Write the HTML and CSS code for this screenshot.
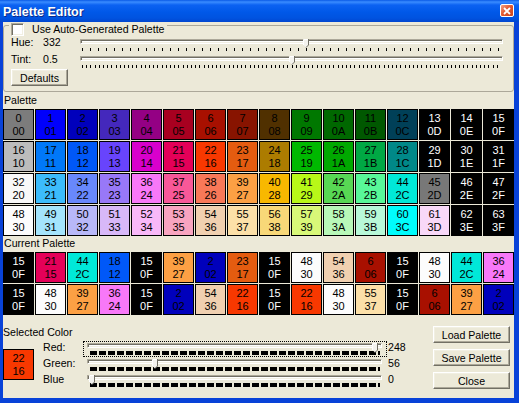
FILE: index.html
```html
<!DOCTYPE html>
<html lang="en">
<head>
  <meta charset="UTF-8">
  <title>Palette Editor</title>
  <link rel="stylesheet" href="styles.css">
</head>
<body>
  <div class="window">
    <div class="titlebar">
      <span class="title">Palette Editor</span>
      <span class="close-btn">
        <svg width="8" height="8" viewBox="0 0 8 8"><path d="M1 1L7 7M7 1L1 7" stroke="#fff" stroke-width="1.8"/></svg>
      </span>
    </div>

    <div class="client">
      <fieldset class="group">
        <legend><span class="checkbox"></span><span>Use Auto-Generated Palette</span></legend>
        <div class="slider-row">
          <span class="row-label">Hue:</span>
          <span class="row-value">332</span>
          <div class="slider">
            <div class="track"></div>
            <div class="ticks ticks-hue"></div>
            <svg class="thumb" style="left: 223px" width="6" height="9" viewBox="0 0 6 9">
              <path d="M0.5 0.5H5.5V6L3 8.5L0.5 6Z" fill="#f4f3ee"/>
              <path d="M0.5 6V0.5H5" fill="none" stroke="#fff"/>
              <path d="M5.5 0V6L3 8.5" fill="none" stroke="#716f64"/>
            </svg>
          </div>
        </div>
        <div class="slider-row">
          <span class="row-label">Tint:</span>
          <span class="row-value">0.5</span>
          <div class="slider">
            <div class="track"></div>
            <div class="ticks ticks-tint"></div>
            <svg class="thumb" style="left: 209px" width="6" height="9" viewBox="0 0 6 9">
              <path d="M0.5 0.5H5.5V6L3 8.5L0.5 6Z" fill="#f4f3ee"/>
              <path d="M0.5 6V0.5H5" fill="none" stroke="#fff"/>
              <path d="M5.5 0V6L3 8.5" fill="none" stroke="#716f64"/>
            </svg>
          </div>
        </div>
        <button class="btn btn-defaults">Defaults</button>
      </fieldset>

      <div class="section-label first">Palette</div>
      <div class="swatches" id="palette"></div>

      <div class="section-label">Current Palette</div>
      <div class="swatches" id="current"></div>

      <div class="bottom">
        <div class="selected">
          <div class="section-label plain">Selected Color</div>
          <div class="selected-body">
            <div class="swatch big" style="background: #f83800">22<br>16</div>
            <div class="rgb">
              <span class="rgb-label">Red:</span>
              <div class="rgb-slider focus">
                <div class="track"></div>
                <div class="ticks ticks-dense"></div>
                <svg class="thumb" style="left: 288px" width="6" height="10" viewBox="0 0 6 10">
                  <path d="M0.5 0.5H5.5V7L3 9.5L0.5 7Z" fill="#f4f3ee"/>
                  <path d="M0.5 7V0.5H5" fill="none" stroke="#fff"/>
                  <path d="M5.5 0V7L3 9.5" fill="none" stroke="#716f64"/>
                </svg>
              </div>
              <span class="rgb-value">248</span>

              <span class="rgb-label">Green:</span>
              <div class="rgb-slider">
                <div class="track"></div>
                <div class="ticks ticks-dense"></div>
                <svg class="thumb" style="left: 68px" width="6" height="10" viewBox="0 0 6 10">
                  <path d="M0.5 0.5H5.5V7L3 9.5L0.5 7Z" fill="#f4f3ee"/>
                  <path d="M0.5 7V0.5H5" fill="none" stroke="#fff"/>
                  <path d="M5.5 0V7L3 9.5" fill="none" stroke="#716f64"/>
                </svg>
              </div>
              <span class="rgb-value">56</span>

              <span class="rgb-label">Blue</span>
              <div class="rgb-slider">
                <div class="track"></div>
                <div class="ticks ticks-dense"></div>
                <svg class="thumb" style="left: 5px" width="6" height="10" viewBox="0 0 6 10">
                  <path d="M0.5 0.5H5.5V7L3 9.5L0.5 7Z" fill="#f4f3ee"/>
                  <path d="M0.5 7V0.5H5" fill="none" stroke="#fff"/>
                  <path d="M5.5 0V7L3 9.5" fill="none" stroke="#716f64"/>
                </svg>
              </div>
              <span class="rgb-value">0</span>
            </div>
          </div>
        </div>
        <div class="buttons">
          <button class="btn">Load Palette</button>
          <button class="btn">Save Palette</button>
          <button class="btn">Close</button>
        </div>
      </div>
    </div>
  </div>

  <script>
    // NES master palette, index 0x00 - 0x3F
    const nes = [
      '#7c7c7c','#0000fc','#0000bc','#4428bc','#940084','#a80020','#a81000','#881400',
      '#503000','#007800','#006800','#005800','#004058','#000000','#000000','#000000',
      '#bcbcbc','#0078f8','#0058f8','#6844fc','#d800cc','#e40058','#f83800','#e45c10',
      '#ac7c00','#00b800','#00a800','#00a844','#008888','#000000','#000000','#000000',
      '#f8f8f8','#3cbcfc','#6888fc','#9878f8','#f878f8','#f85898','#f87858','#fca044',
      '#f8b800','#b8f818','#58d854','#58f898','#00e8d8','#787878','#000000','#000000',
      '#fcfcfc','#a4e4fc','#b8b8f8','#d8b8f8','#f8b8f8','#f8a4c0','#f0d0b0','#fce0a8',
      '#f8d878','#d8f878','#b8f8b8','#b8f8d8','#00fcfc','#f8d8f8','#000000','#000000'
    ];

    const current = [
      15,21,44,18,15,39,2,23,15,48,54,6,15,48,44,36,
      15,48,39,36,15,2,54,22,15,22,48,55,15,6,39,2
    ];

    function makeSwatch(i) {
      const cell = document.createElement('div');
      cell.className = 'swatch';
      if (nes[i] === '#000000') cell.classList.add('dark');
      cell.style.background = nes[i];
      cell.innerHTML = i + '<br>' + i.toString(16).toUpperCase().padStart(2, '0');
      return cell;
    }

    const palette = document.getElementById('palette');
    for (let i = 0; i < 64; i++) palette.appendChild(makeSwatch(i));

    const cur = document.getElementById('current');
    current.forEach(i => cur.appendChild(makeSwatch(i)));
  </script>
</body>
</html>
```

FILE: styles.css
```css
/* General Styles */
* {
  box-sizing: border-box;
}

body {
  margin: 0;
  font-family: "Liberation Sans", Arial, sans-serif;
  font-size: 10.6px;
  color: #000;
  background: #fff;
}

.window {
  width: 519px;
  height: 403px;
  display: flex;
  flex-direction: column;
  background: #0842d8;
}

/* Title bar */
.titlebar {
  height: 22px;
  flex: none;
  display: flex;
  align-items: center;
  justify-content: space-between;
  padding: 0 5px 0 3px;
  background: linear-gradient(to bottom, #0a5ae6 0, #3a8cff 2px, #0c62f2 5px, #0058e8 12px, #0053e0 18px, #0146d0 22px);
}

.title {
  color: #fff;
  font-weight: bold;
  font-size: 12.5px;
  text-shadow: 1px 1px 0 #0a2a8a;
  margin-top: 1px;
}

.close-btn {
  width: 14px;
  height: 13px;
  display: flex;
  align-items: center;
  justify-content: center;
  border: 1px solid #fff;
  border-radius: 2px;
  background: linear-gradient(135deg, #f3a286 0, #e25a31 45%, #c9441c 100%);
  margin-top: -1px;
}

/* Client area */
.client {
  flex: 1;
  margin: 0 5px 5px 3px;
  background: #ece9d8;
  display: flex;
  flex-direction: column;
}

.group {
  margin: 0;
  padding: 8px 10px 5px 7px;
  border: 1px solid #aca899;
  border-radius: 3px;
  min-width: 0;
}

.group legend {
  display: flex;
  align-items: flex-start;
  gap: 8px;
  height: 6px;
  padding: 0 2px;
  margin-left: -2px;
}

.group legend span:last-child {
  line-height: 13px;
  margin-top: 1px;
}

.checkbox {
  width: 13px;
  height: 13px;
  margin-top: 1px;
  background: #fff;
  border: 1px solid;
  border-color: #aca899 #fff #fff #aca899;
  box-shadow: inset 1px 1px 0 #716f64, inset -1px -1px 0 #f1efe2;
}

.slider-row {
  display: flex;
  height: 17px;
}

.row-label {
  width: 32px;
  line-height: 13px;
}

.row-value {
  width: 37px;
  line-height: 13px;
}

.slider {
  flex: 1;
  position: relative;
  padding-top: 3px;
}

.track {
  height: 5px;
  background: #fff;
  border: 1px solid;
  border-color: #aca899 #fff #fff #aca899;
  box-shadow: inset 1px 1px 0 #716f64, inset -1px -1px 0 #f1efe2;
}

.ticks {
  height: 3px;
  margin: 4px 2px 0 2px;
}

.ticks-hue {
  background: repeating-linear-gradient(to right, #000 0 1px, transparent 1px 8px);
}

.ticks-tint {
  background: repeating-linear-gradient(to right, #000 0 1px, transparent 1px 4.19px);
}

.thumb {
  position: absolute;
  top: 3px;
  display: block;
}

/* Buttons */
.btn {
  font: inherit;
  color: #000;
  height: 17px;
  padding: 0;
  background: #ece9d8;
  border: 1px solid;
  border-color: #fff #716f64 #716f64 #fff;
  box-shadow: inset -1px -1px 0 #aca899, inset 1px 1px 0 #f1efe2;
}

.btn-defaults {
  width: 57px;
  margin-top: -1px;
}

/* Palette grids */
.section-label {
  line-height: 13px;
  margin: 1px 0 2px 1px;
}

.section-label.first {
  margin-top: 2px;
}

.swatches {
  display: grid;
  grid-template-columns: repeat(16, 31px);
  grid-auto-rows: 31px;
  gap: 1px;
}

.swatch {
  height: 31px;
  border: 1px solid #000;
  text-align: center;
  font-family: "Liberation Sans Narrow", "Liberation Sans", Arial, sans-serif;
  font-size: 11px;
  line-height: 12.7px;
  padding-top: 2px;
  color: #000;
}

.swatch.dark {
  color: #fff;
}

/* Selected colour */
.bottom {
  display: flex;
  margin-top: 11px;
}

.selected {
  flex: 1;
}

.section-label.plain {
  margin: 0;
}

.selected-body {
  display: flex;
  margin-top: 2px;
}

.swatch.big {
  width: 31px;
  margin-top: 8px;
}

.rgb {
  display: grid;
  grid-template-columns: 40px 304px auto;
  grid-auto-rows: 16px;
  margin-left: 9px;
}

.rgb-label,
.rgb-value {
  line-height: 13px;
}

.rgb-value {
  padding-left: 1px;
}

.rgb-slider {
  position: relative;
  border: 1px dotted transparent;
}

.rgb-slider.focus {
  border-color: #000;
}

.rgb-slider .track {
  margin: 1px 4px 0 3px;
}

.rgb-slider .ticks {
  height: 4px;
  margin: 3px 6px 0 6px;
}

.ticks-dense {
  background: repeating-linear-gradient(to right, #000 0 7px, transparent 7px 9px);
}

.rgb-slider .thumb {
  top: 1px;
}

.buttons {
  display: flex;
  flex-direction: column;
  gap: 6px;
  padding-right: 4px;
}

.buttons .btn {
  width: 77px;
}
```
